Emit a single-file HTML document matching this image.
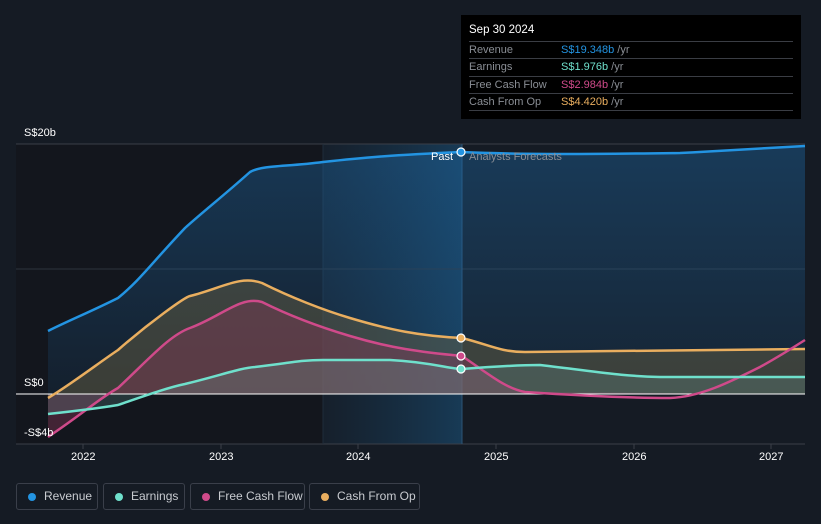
<!DOCTYPE html>
<html><head><meta charset="utf-8"><style>
body{margin:0;width:821px;height:524px;background:#151b24;font-family:"Liberation Sans",sans-serif;overflow:hidden;position:relative}
.tt{position:absolute;left:461px;top:15px;width:340px;height:104px;background:#000;color:#fff;font-size:11px}
.tt .h{position:absolute;left:8px;top:9px;font-size:11.5px}
.row{position:absolute;left:8px;width:324px;border-top:1px solid #3a3d44;height:17px;line-height:17px;color:#8a8e95}
.row span{position:absolute;left:92px}
.leg{position:absolute;top:483px;height:27px;border:1px solid #3a3f4a;border-radius:3px;box-sizing:border-box;color:#c8cbd0;font-size:12px;line-height:25px}
.leg i{position:absolute;left:11px;top:9px;width:8px;height:8px;border-radius:50%}
.leg b{font-weight:normal;position:absolute;left:27px}
.yr{position:absolute;top:451px;color:#fff;font-size:11px}
</style></head><body>
<svg width="821" height="524" style="position:absolute;left:0;top:0">
<defs>
<linearGradient id="rg" x1="0" y1="0" x2="0" y2="1"><stop offset="0" stop-color="#1e6aa8" stop-opacity=".4"/><stop offset="1" stop-color="#1e6aa8" stop-opacity=".12"/></linearGradient>
<linearGradient id="hg" x1="0" y1="0" x2="1" y2="0"><stop offset="0" stop-color="#1a4a70" stop-opacity=".1"/><stop offset="1" stop-color="#1a5a88" stop-opacity=".5"/></linearGradient>
</defs>
<rect x="16" y="144" width="307" height="300" fill="#13161d"/>
<rect x="323" y="144" width="139" height="300" fill="url(#hg)"/>
<line x1="16" y1="144" x2="805" y2="144" stroke="#3a3f48"/>
<line x1="16" y1="269" x2="805" y2="269" stroke="#2e343d"/>
<line x1="16" y1="444" x2="805" y2="444" stroke="#3a3f48"/>
<line x1="462" y1="144" x2="462" y2="444" stroke="#2c5476"/>
<line x1="323" y1="144" x2="323" y2="444" stroke="#1f2c3a"/>
<path d="M48,331 C70,320 90,312 118,298 C140,280 150,265 185,228 C205,210 222,197 250,172 C262,165 285,167 323,162 C360,158 390,155 462,152 C530,155 600,154 680,153 C740,150 805,146 805,146 L805,394 L48,394Z" fill="url(#rg)"/>
<path d="M48,398 C70,385 100,362 118,350 C150,322 185,297 190,296 C222,288 240,275 262,283 C290,297 323,310 350,318 C390,330 420,336 462,338 C490,345 500,352 525,352 L805,349 L805,394 L48,394Z" fill="#6b6142" opacity=".45"/>
<path d="M48,437 C85,412 100,398 118,388 C150,358 170,335 190,328 C222,316 240,296 262,302 C290,316 323,328 350,336 C390,348 420,352 462,356 C490,375 505,388 525,392 L805,394 L48,394Z" fill="#8a3a5a" opacity=".4"/>
<path d="M48,414 C85,410 100,408 118,405 C150,394 170,387 185,384 C222,375 240,368 255,367 C290,363 300,360 323,360 L390,360 C430,362 450,369 462,369 C500,366 520,365 540,365 C600,372 620,376 660,377 L805,377 L805,394 L48,394Z" fill="#7fc9c0" opacity=".18"/>
<line x1="16" y1="394" x2="805" y2="394" stroke="#fff"/>
<g fill="none" stroke-width="2.5">
<path d="M48,331 C70,320 90,312 118,298 C140,280 150,265 185,228 C205,210 222,197 250,172 C262,165 285,167 323,162 C360,158 390,155 462,152 C530,155 600,154 680,153 C740,150 805,146 805,146" stroke="#2394e2"/>
<path d="M48,398 C70,385 100,362 118,350 C150,322 185,297 190,296 C222,288 240,275 262,283 C290,297 323,310 350,318 C390,330 420,336 462,338 C490,345 500,352 525,352 L805,349" stroke="#e9ae5f"/>
<path d="M48,437 C85,412 100,398 118,388 C150,358 170,335 190,328 C222,316 240,296 262,302 C290,316 323,328 350,336 C390,348 420,352 462,356 C490,375 505,388 525,392 C600,397 640,398 670,398 C700,397 730,382 760,367 C780,356 805,340 805,340" stroke="#cf4a8a"/>
<path d="M48,414 C85,410 100,408 118,405 C150,394 170,387 185,384 C222,375 240,368 255,367 C290,363 300,360 323,360 L390,360 C430,362 450,369 462,369 C500,366 520,365 540,365 C600,372 620,376 660,377 L805,377" stroke="#6fe0cc"/>
</g>
<circle cx="461" cy="152" r="4" fill="#2394e2" stroke="#fff" stroke-width="1.2"/>
<circle cx="461" cy="338" r="4" fill="#e9ae5f" stroke="#fff" stroke-width="1.2"/>
<circle cx="461" cy="356" r="4" fill="#cf4a8a" stroke="#fff" stroke-width="1.2"/>
<circle cx="461" cy="369" r="4" fill="#6fe0cc" stroke="#fff" stroke-width="1.2"/>
<g stroke="#3a3f48"><line x1="83" y1="444" x2="83" y2="449"/><line x1="221" y1="444" x2="221" y2="449"/><line x1="358" y1="444" x2="358" y2="449"/><line x1="496" y1="444" x2="496" y2="449"/><line x1="634" y1="444" x2="634" y2="449"/><line x1="771" y1="444" x2="771" y2="449"/></g>
<text x="24" y="136" fill="#fff" font-size="11" font-family="Liberation Sans">S$20b</text>
<text x="24" y="386" fill="#fff" font-size="11" font-family="Liberation Sans">S$0</text>
<text x="24" y="436" fill="#fff" font-size="11" font-family="Liberation Sans">-S$4b</text>
<text x="453" y="160" fill="#fff" font-size="11" text-anchor="end" font-family="Liberation Sans">Past</text>
<text x="469" y="160" fill="#8a8e95" font-size="11" font-family="Liberation Sans">Analysts Forecasts</text>
</svg>
<div class="yr" style="left:71px">2022</div>
<div class="yr" style="left:209px">2023</div>
<div class="yr" style="left:346px">2024</div>
<div class="yr" style="left:484px">2025</div>
<div class="yr" style="left:622px">2026</div>
<div class="yr" style="left:759px">2027</div>
<div class="tt"><div class="h">Sep 30 2024</div>
<div class="row" style="top:26px">Revenue<span><em style="font-style:normal;color:#2394e2">S$19.348b</em> /yr</span></div>
<div class="row" style="top:43px">Earnings<span><em style="font-style:normal;color:#6fe0cc">S$1.976b</em> /yr</span></div>
<div class="row" style="top:61px">Free Cash Flow<span><em style="font-style:normal;color:#cf4a8a">S$2.984b</em> /yr</span></div>
<div class="row" style="top:78px">Cash From Op<span><em style="font-style:normal;color:#e9ae5f">S$4.420b</em> /yr</span></div>
<div class="row" style="top:95px;height:0"></div>
</div>
<div class="leg" style="left:16px;width:82px"><i style="background:#2394e2"></i><b>Revenue</b></div>
<div class="leg" style="left:103px;width:82px"><i style="background:#6fe0cc"></i><b>Earnings</b></div>
<div class="leg" style="left:190px;width:115px"><i style="background:#cf4a8a"></i><b>Free Cash Flow</b></div>
<div class="leg" style="left:309px;width:111px"><i style="background:#e9ae5f"></i><b>Cash From Op</b></div>
</body></html>
